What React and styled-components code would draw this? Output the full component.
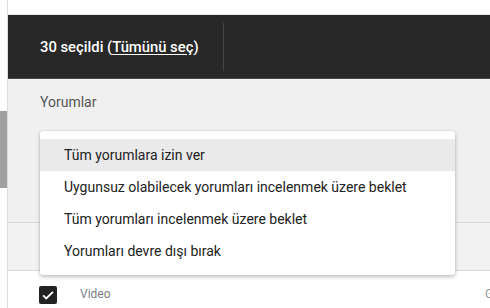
import React from "react";
import styled, { createGlobalStyle } from "styled-components";

const Global = createGlobalStyle`
  html, body { margin: 0; padding: 0; background: #fff; }
  body { font-family: Roboto, "Noto Sans", Arial, sans-serif; overflow: hidden; }
  #root { width: 490px; height: 308px; overflow: hidden; }
`;

const Page = styled.div`
  display: flex;
  width: 490px;
  height: 308px;
  overflow: hidden;
`;

const Gutter = styled.div`
  width: 7px;
  flex: none;
  border-right: 1px solid #dcdcdc;
  display: flex;
  flex-direction: column;
  padding-top: 111px;
  box-sizing: content-box;
`;

const Thumb = styled.div`
  height: 77px;
  background: #a0a0a0;
  flex: none;
`;

const Main = styled.div`
  flex: 1;
  min-width: 0;
  display: flex;
  flex-direction: column;
  & > * { flex-shrink: 0; }
`;

const TopSpace = styled.div`
  height: 14px;
  border-bottom: 1px solid #e8e8e8;
  background: #fff;
`;

const Toolbar = styled.div`
  height: 63px;
  background: #282828;
  border-bottom: 1px solid #4a4a4a;
  display: flex;
  align-items: center;
  padding-left: 32px;
  gap: 24px;
`;

const Selected = styled.div`
  color: #fff;
  font-size: 14.8px;
  font-weight: 500;
  white-space: nowrap;
`;

const SelectAll = styled.span`
  text-decoration: underline;
  text-underline-offset: 2px;
`;

const Divider = styled.div`
  width: 1px;
  height: 48px;
  background: #454545;
`;

const Panel = styled.div`
  position: relative;
  height: 144px;
  background: #f0f0f0;
  border-bottom: 1px solid #d9d9d9;
  padding: 13px 0 0 32px;
  box-sizing: border-box;
`;

const Label = styled.div`
  font-size: 14px;
  line-height: 20px;
  color: #555;
`;

const Band = styled.div`
  height: 47px;
  background: #f2f2f2;
  border-bottom: 1px solid #d9d9d9;
`;

const Row = styled.div`
  height: 46px;
  display: flex;
  align-items: center;
  padding: 0 0 0 31px;
  background: #fff;
`;

const Check = styled.div`
  width: 18px;
  height: 18px;
  border-radius: 2px;
  background: #222;
  display: flex;
  align-items: center;
  justify-content: center;
  flex: none;
  margin-top: 2px;
`;

const HeaderCell = styled.div`
  font-size: 12px;
  color: ${(p) => p.$color || "#7a7f88"};
  width: ${(p) => p.$w}px;
  flex: none;
  white-space: nowrap;
  overflow: hidden;
`;

const Menu = styled.div`
  position: absolute;
  left: 32px;
  top: 52px;
  width: 415px;
  background: #fff;
  border-radius: 3px;
  box-shadow: 0 2px 4px rgba(0, 0, 0, 0.24), 0 0 2px rgba(0, 0, 0, 0.12);
  padding: 8px 0;
  z-index: 2;
`;

const Item = styled.div`
  height: 32px;
  display: flex;
  align-items: center;
  padding-left: 24px;
  font-size: 14px;
  color: #222;
  background: ${(p) => (p.$active ? "#eaeaea" : "transparent")};
  white-space: nowrap;
`;

const items = [
  "Tüm yorumlara izin ver",
  "Uygunsuz olabilecek yorumları incelenmek üzere beklet",
  "Tüm yorumları incelenmek üzere beklet",
  "Yorumları devre dışı bırak",
];

export default function App() {
  return (
    <>
      <Global />
      <Page>
        <Gutter>
          <Thumb />
        </Gutter>
        <Main>
          <TopSpace />
          <Toolbar>
            <Selected>
              30 seçildi (<SelectAll>Tümünü seç</SelectAll>)
            </Selected>
            <Divider />
          </Toolbar>
          <Panel>
            <Label>Yorumlar</Label>
            <Menu>
              {items.map((t, i) => (
                <Item key={t} $active={i === 0}>
                  {t}
                </Item>
              ))}
            </Menu>
          </Panel>
          <Band />
          <Row>
            <Check>
              <svg width="14" height="14" viewBox="0 0 24 24">
                <path d="M3.5 12.5l5.5 5.5L20.5 6.5" fill="none" stroke="#fff" strokeWidth="3.2" />
              </svg>
            </Check>
            <HeaderCell $w={23} />
            <HeaderCell $w={405}>Video</HeaderCell>
            <HeaderCell $w={20} $color="#999">Görünürlük</HeaderCell>
          </Row>
        </Main>
      </Page>
    </>
  );
}
